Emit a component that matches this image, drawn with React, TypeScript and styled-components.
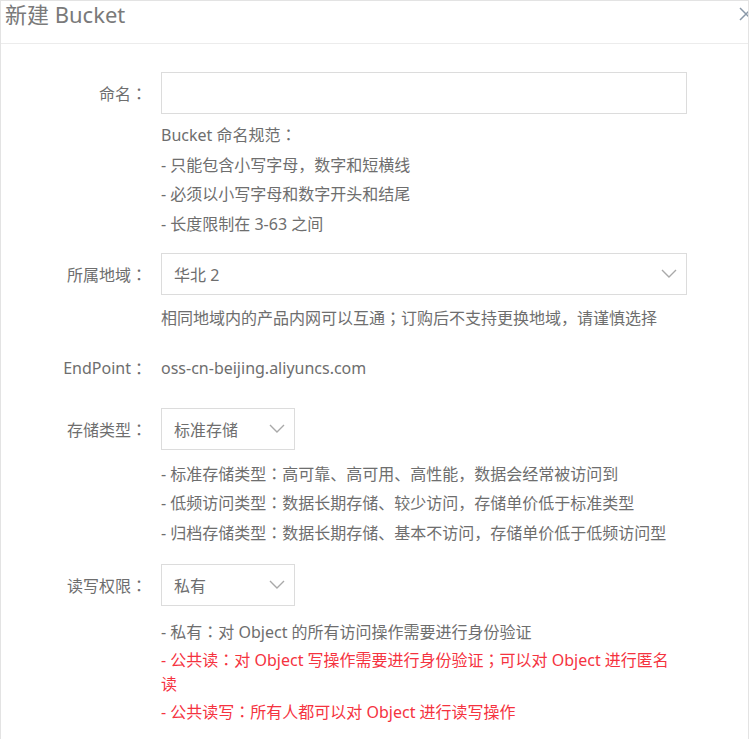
import styled, { createGlobalStyle } from "styled-components";

const Global = createGlobalStyle`
  html, body {
    margin: 0;
    padding: 0;
    background: #fff;
  }
  body {
    font-family: "Noto Sans", "Noto Sans CJK SC", sans-serif;
  }
`;

const Dialog = styled.div`
  width: 749px;
  height: 739px;
  border: 1px solid #e3e3e3;
  border-bottom: none;
  background: #fff;
  box-sizing: border-box;
  overflow: hidden;
`;

const Header = styled.div`
  height: 42px;
  border-bottom: 1px solid #ececec;
  display: flex;
  align-items: flex-start;
  justify-content: space-between;
`;

const Title = styled.h2`
  margin: 0;
  padding-left: 4px;
  font-size: 22px;
  line-height: 26px;
  font-weight: normal;
  color: #7a7a7a;
`;

const Close = styled.button`
  border: none;
  background: none;
  padding: 0;
  margin: 5px -6px 0 0;
  width: 16px;
  height: 16px;
  display: flex;
  align-items: center;
  justify-content: center;
`;

const Body = styled.div`
  padding-top: 28px;
  display: flex;
  flex-direction: column;
`;

const Row = styled.div<{ $gap: number }>`
  display: grid;
  grid-template-columns: 146px 1fr;
  column-gap: 14px;
  margin-bottom: ${(p) => p.$gap}px;
`;

const Label = styled.div<{ $h?: number }>`
  height: ${(p) => p.$h ?? 24}px;
  display: flex;
  align-items: center;
  justify-content: flex-end;
  font-size: 16px;
  color: #6e6e6e;
  white-space: nowrap;
`;

const Punct = styled.span`
  font-family: "Noto Sans CJK JP", sans-serif;
  display: inline-block;
  line-height: 1;
`;

const Field = styled.div`
  display: flex;
  flex-direction: column;
  width: 526px;
`;

const Input = styled.div`
  height: 42px;
  border: 1px solid #dcdcdc;
  box-sizing: border-box;
`;

const Select = styled.div<{ $w?: number }>`
  height: 42px;
  width: ${(p) => (p.$w ? `${p.$w}px` : "100%")};
  border: 1px solid #dcdcdc;
  box-sizing: border-box;
  display: flex;
  align-items: center;
  justify-content: space-between;
  padding: 0 9px 0 12px;
  font-size: 16px;
  color: #6e6e6e;
`;

const Value = styled.div`
  font-size: 16px;
  line-height: 24px;
  color: #6e6e6e;
`;

const Help = styled.ul<{ $top?: number; $gap?: number }>`
  list-style: none;
  margin: ${(p) => p.$top ?? 11}px 0 0;
  padding: 0;
  width: 516px;
  display: flex;
  flex-direction: column;
  gap: ${(p) => p.$gap ?? 5.5}px;
`;

const Item = styled.li<{ $red?: boolean }>`
  font-size: 16px;
  line-height: 24px;
  color: ${(p) => (p.$red ? "#f5333f" : "#6e6e6e")};
`;

// full-width punctuation centred in its cell, as the reference font draws it
const T = ({ children }: { children: string }) => (
  <>
    {children.split(/([：；，])/).map((s, i) =>
      /^[：；，]$/.test(s) ? <Punct key={i}>{s}</Punct> : s
    )}
  </>
);

const Chevron = () => (
  <svg width="16" height="9" viewBox="0 0 16 9">
    <path d="M1 1l7 7 7-7" fill="none" stroke="#a9a9a9" strokeWidth="1.4" />
  </svg>
);

export default function App() {
  return (
    <>
      <Global />
      <Dialog>
        <Header>
          <Title>新建 Bucket</Title>
          <Close aria-label="close">
            <svg width="14" height="14" viewBox="0 0 14 14">
              <path d="M1 1l12 12M13 1L1 13" stroke="#8a98a8" strokeWidth="1.5" />
            </svg>
          </Close>
        </Header>
        <Body>
          <Row $gap={17}>
            <Label $h={42}><T>命名：</T></Label>
            <Field>
              <Input />
              <Help $top={9}>
                <Item><T>Bucket 命名规范：</T></Item>
                <Item><T>- 只能包含小写字母，数字和短横线</T></Item>
                <Item><T>- 必须以小写字母和数字开头和结尾</T></Item>
                <Item><T>- 长度限制在 3-63 之间</T></Item>
              </Help>
            </Field>
          </Row>
          <Row $gap={26}>
            <Label $h={42}><T>所属地域：</T></Label>
            <Field>
              <Select>
                华北 2
                <Chevron />
              </Select>
              <Help>
                <Item><T>相同地域内的产品内网可以互通；订购后不支持更换地域，请谨慎选择</T></Item>
              </Help>
            </Field>
          </Row>
          <Row $gap={28}>
            <Label><T>EndPoint：</T></Label>
            <Value>oss-cn-beijing.aliyuncs.com</Value>
          </Row>
          <Row $gap={19}>
            <Label $h={42}><T>存储类型：</T></Label>
            <Field>
              <Select $w={134}>
                标准存储
                <Chevron />
              </Select>
              <Help $top={12}>
                <Item><T>- 标准存储类型：高可靠、高可用、高性能，数据会经常被访问到</T></Item>
                <Item><T>- 低频访问类型：数据长期存储、较少访问，存储单价低于标准类型</T></Item>
                <Item><T>- 归档存储类型：数据长期存储、基本不访问，存储单价低于低频访问型</T></Item>
              </Help>
            </Field>
          </Row>
          <Row $gap={0}>
            <Label $h={42}><T>读写权限：</T></Label>
            <Field>
              <Select $w={134}>
                私有
                <Chevron />
              </Select>
              <Help $top={14} $gap={4}>
                <Item><T>- 私有：对 Object 的所有访问操作需要进行身份验证</T></Item>
                <Item $red><T>- 公共读：对 Object 写操作需要进行身份验证；可以对 Object 进行匿名读</T></Item>
                <Item $red><T>- 公共读写：所有人都可以对 Object 进行读写操作</T></Item>
              </Help>
            </Field>
          </Row>
        </Body>
      </Dialog>
    </>
  );
}
